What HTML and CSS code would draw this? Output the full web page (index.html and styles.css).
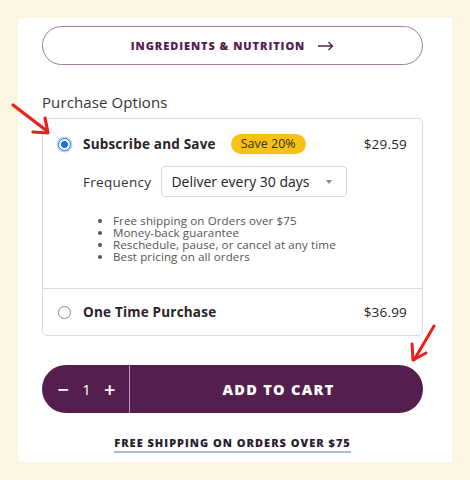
FILE: index.html
```html
<!DOCTYPE html>
<html lang="en">
<head>
<meta charset="utf-8">
<title>Purchase Options</title>
<link rel="stylesheet" href="styles.css">
</head>
<body>
<div class="card">
  <a class="ingredients" href="#">
    <span class="ing-text">INGREDIENTS &amp; NUTRITION</span>
    <svg class="ing-arrow" width="16" height="10" viewBox="0 0 16 10"><path d="M0 5H14.5M10.5 1L14.5 5L10.5 9" fill="none" stroke="#54204f" stroke-width="1.4"/></svg>
  </a>

  <h3 class="po-title">Purchase Options</h3>

  <div class="options">
    <div class="opt opt-sub">
      <div class="opt-row">
        <span class="radio radio-on"></span>
        <span class="opt-label">Subscribe and Save</span>
        <span class="badge">Save 20%</span>
        <span class="price">$29.59</span>
      </div>
      <div class="freq-row">
        <span class="freq-label">Frequency</span>
        <div class="select">
          <span>Deliver every 30 days</span>
          <span class="caret"></span>
        </div>
      </div>
      <ul class="perks">
        <li>Free shipping on Orders over $75</li>
        <li>Money-back guarantee</li>
        <li>Reschedule, pause, or cancel at any time</li>
        <li>Best pricing on all orders</li>
      </ul>
    </div>
    <div class="opt opt-once">
      <div class="opt-row">
        <span class="radio"></span>
        <span class="opt-label">One Time Purchase</span>
        <span class="price">$36.99</span>
      </div>
    </div>
  </div>

  <div class="cart">
    <div class="qty">
      <span class="q-btn">&minus;</span>
      <span class="q-num">1</span>
      <span class="q-btn">+</span>
    </div>
    <button class="add">ADD TO CART</button>
  </div>

  <div class="ship"><span>FREE SHIPPING ON ORDERS OVER $75</span></div>
</div>

<svg class="mark mark-1" width="44" height="40" viewBox="0 0 44 40"><path d="M2 4 L36 30" stroke="#ee1c1c" stroke-width="3.2" stroke-linecap="round" fill="none"/><path d="M22 31 L37 32 L34 17" stroke="#ee1c1c" stroke-width="3.2" stroke-linecap="round" stroke-linejoin="round" fill="none"/></svg>
<svg class="mark mark-2" width="30" height="40" viewBox="0 0 30 40"><path d="M26 2 L6 36" stroke="#ee1c1c" stroke-width="3" stroke-linecap="round" fill="none"/><path d="M4 20 L5 36 L18 29" stroke="#ee1c1c" stroke-width="3" stroke-linecap="round" stroke-linejoin="round" fill="none"/></svg>
</body>
</html>
```

FILE: styles.css
```css
* { box-sizing: border-box; }
body {
  margin: 0;
  background: #fcf5e1;
  font-family: "Open Sans", "Liberation Sans", sans-serif;
  position: relative;
  width: 470px;
  height: 480px;
}
.card {
  position: absolute;
  left: 18px;
  top: 18px;
  width: 434px;
  height: 444px;
  background: #fff;
  padding: 8px 29px 0 24px;
  display: flex;
  flex-direction: column;
}
.ingredients {
  height: 39px;
  border: 1.5px solid #9d7f9c;
  border-radius: 20px;
  display: flex;
  align-items: center;
  justify-content: center;
  gap: 13px;
  text-decoration: none;
  color: #54204f;
}
.ing-text {
  font-size: 11px;
  font-weight: 800;
  letter-spacing: 0.95px;
}
.ing-arrow { display: block; }
.po-title {
  margin: 27px 0 6px;
  font-size: 15px;
  line-height: 20px;
  font-weight: 400;
  color: #333;
  letter-spacing: 0.1px;
}
.options {
  border: 1px solid #d3dde8;
  border-radius: 5px;
}
.opt-sub {
  padding: 15px 15px 25px 14px;
  border-bottom: 1px solid #d3dde8;
}
.opt-once {
  padding: 0 15px 0 14px;
  height: 46px;
  display: flex;
  align-items: center;
}
.opt-once .opt-row { width: 100%; }
.opt-row {
  display: flex;
  align-items: center;
  height: 20px;
}
.radio {
  width: 13px;
  height: 13px;
  border-radius: 50%;
  border: 1.5px solid #8a8a8a;
  margin-left: 1px;
  margin-right: 12px;
  flex: none;
}
.radio-on {
  border: 1.5px solid #1a73e8;
  background: radial-gradient(circle, #1a73e8 0 3.2px, #fff 3.8px);
  box-shadow: 0 0 0 1.5px #b9d3f7;
}
.opt-label {
  font-size: 13.5px;
  font-weight: 700;
  color: #2b2226;
  letter-spacing: 0.2px;
}
.badge {
  margin-left: 15px;
  background: #f5c216;
  border-radius: 10px;
  height: 20px;
  line-height: 20px;
  padding: 0 10px;
  font-size: 12.5px;
  color: #3a2a10;
}
.price {
  margin-left: auto;
  font-size: 13.5px;
  color: #2b2226;
  letter-spacing: 0.2px;
}
.freq-row {
  display: flex;
  align-items: center;
  margin: 12px 0 0 26px;
  gap: 10px;
}
.freq-label {
  font-size: 13.5px;
  color: #333;
  letter-spacing: 0.3px;
}
.select {
  width: 186px;
  height: 31px;
  border: 1px solid #d3dbe3;
  border-radius: 4px;
  display: flex;
  align-items: center;
  padding: 0 14px 0 9px;
  font-size: 14px;
  color: #222;
  justify-content: space-between;
}
.caret {
  width: 0;
  height: 0;
  border-left: 3.5px solid transparent;
  border-right: 3.5px solid transparent;
  border-top: 4px solid #888;
}
.perks {
  margin: 18px 0 0 0;
  padding-left: 56px;
  font-size: 11.6px;
  line-height: 12px;
  color: #555;
  letter-spacing: 0.1px;
}
.cart {
  margin-top: 29px;
  height: 48px;
  border-radius: 24px;
  background: #541e4e;
  display: flex;
  overflow: hidden;
}
.qty {
  width: 88px;
  display: flex;
  align-items: center;
  justify-content: space-around;
  padding: 0 7px 0 9px;
  border-right: 1.5px solid #b496b0;
  color: #fff;
}
.q-btn {
  font-size: 20px;
  font-weight: 600;
}
.q-num {
  font-size: 15px;
  font-weight: 400;
  color: #fff;
}
.add {
  flex: 1;
  background: transparent;
  border: none;
  color: #fff;
  font-family: inherit;
  font-size: 14.5px;
  font-weight: 800;
  letter-spacing: 1.3px;
  padding: 0 0 0 4px;
}
.ship {
  margin-top: 17px;
  text-align: center;
}
.ship span {
  font-size: 11px;
  font-weight: 800;
  letter-spacing: 1px;
  color: #2b2030;
  padding-bottom: 1px;
  border-bottom: 2px solid #a9b9e3;
}
.mark { position: absolute; }
.mark-1 { left: 11px; top: 101px; }
.mark-2 { left: 408px; top: 324px; }
```
